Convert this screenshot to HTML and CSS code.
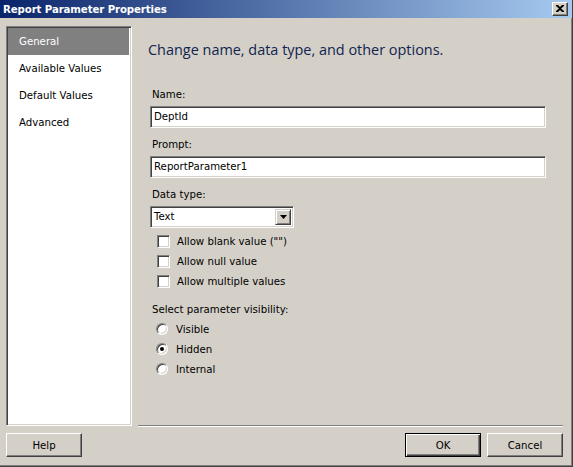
FILE: index.html
```html
<!DOCTYPE html>
<html>
<head>
<meta charset="utf-8">
<link rel="stylesheet" href="styles.css">
</head>
<body>
<div class="window">
  <div class="titlebar">
    <span class="title">Report Parameter Properties</span>
    <span class="close"><svg width="8" height="7" viewBox="0 0 8 7"><path d="M0 0h2l2 2 2-2h2v1L5 3.5 8 6v1H6L4 5 2 7H0V6l3-2.5L0 1z" fill="#000"/></svg></span>
  </div>
  <div class="body">
    <ul class="nav">
      <li class="nav-item selected">General</li>
      <li class="nav-item">Available Values</li>
      <li class="nav-item">Default Values</li>
      <li class="nav-item">Advanced</li>
    </ul>
    <div class="main">
      <h1 class="heading">Change name, data type, and other options.</h1>
      <div class="label first">Name:</div>
      <div class="textbox">DeptId</div>
      <div class="label">Prompt:</div>
      <div class="textbox">ReportParameter1</div>
      <div class="label">Data type:</div>
      <div class="select"><span class="select-text">Text</span><span class="drop"><svg width="7" height="4" viewBox="0 0 7 4"><path d="M0 0h7L3.5 4z" fill="#000"/></svg></span></div>
      <div class="checks">
        <div class="check-row"><span class="checkbox"></span><span>Allow blank value ("")</span></div>
        <div class="check-row"><span class="checkbox"></span><span>Allow null value</span></div>
        <div class="check-row"><span class="checkbox"></span><span>Allow multiple values</span></div>
      </div>
      <div class="label vis">Select parameter visibility:</div>
      <div class="radios">
        <div class="radio-row"><span class="radio"></span><span>Visible</span></div>
        <div class="radio-row"><span class="radio checked"></span><span>Hidden</span></div>
        <div class="radio-row"><span class="radio"></span><span>Internal</span></div>
      </div>
    </div>
  </div>
  <div class="footer">
    <button class="btn">Help</button>
    <div class="spacer"></div>
    <button class="btn default">OK</button>
    <button class="btn">Cancel</button>
  </div>
</div>
</body>
</html>
```
FILE: styles.css
```css
html, body {
  margin: 0;
  padding: 0;
  background: #d4d0c8;
}
body {
  font-family: "DejaVu Sans", sans-serif;
  font-size: 10.2px;
  color: #000;
}
.window {
  width: 573px;
  height: 467px;
  box-sizing: border-box;
  border-right: 1px solid #404040;
  border-bottom: 1px solid #404040;
  box-shadow: inset -1px -1px 0 #808080;
  display: flex;
  flex-direction: column;
}
.titlebar {
  height: 18px;
  background: linear-gradient(to right, #0a246a, #a6caf0);
  display: flex;
  align-items: center;
  padding-left: 3px;
  padding-right: 4px;
}
.title {
  flex: 1;
  color: #fff;
  font-weight: bold;
  font-size: 10.2px;
  letter-spacing: -0.1px;
}
.close {
  width: 16px;
  height: 14px;
  box-sizing: border-box;
  background: #d4d0c8;
  border-top: 1px solid #fff;
  border-left: 1px solid #fff;
  border-right: 1px solid #404040;
  border-bottom: 1px solid #404040;
  box-shadow: inset -1px -1px 0 #808080;
  display: flex;
  align-items: center;
  justify-content: center;
  padding-right: 1px;
  padding-bottom: 1px;
}
.body {
  display: flex;
  padding: 8px 0 0 6px;
  height: 400px;
}
.nav {
  list-style: none;
  margin: 0;
  padding: 0;
  width: 126px;
  height: 400px;
  box-sizing: border-box;
  background: #fff;
  border-top: 1px solid #808080;
  border-left: 1px solid #808080;
  border-right: 1px solid #fff;
  border-bottom: 1px solid #fff;
  box-shadow: inset 1px 1px 0 #404040, inset -1px -1px 0 #d4d0c8;
  padding: 1px 2px 0 1px;
}
.nav-item {
  height: 27px;
  line-height: 27px;
  padding-left: 11px;
}
.nav-item.selected {
  background: #808080;
  color: #fff;
}
.main {
  margin-left: 6px;
  width: 425px;
  height: 400px;
  box-sizing: border-box;
  border-bottom: 1px solid #808080;
  box-shadow: 0 1px 0 #fff;
  padding: 15px 0 0 12px;
  display: flex;
  flex-direction: column;
  align-items: flex-start;
}
.heading {
  margin: 0 0 0 -2px;
  font-family: "Open Sans", sans-serif;
  font-weight: normal;
  font-size: 14.45px;
  line-height: 18px;
  color: #10244f;
  height: 18px;
}
.label {
  margin: 10px 0 5px 2px;
  line-height: 13px;
  height: 13px;
}
.label.first {
  margin-top: 29px;
}
.textbox, .select {
  width: 396px;
  height: 22px;
  box-sizing: border-box;
  background: #fff;
  border-top: 1px solid #808080;
  border-left: 1px solid #808080;
  border-right: 1px solid #fff;
  border-bottom: 1px solid #fff;
  box-shadow: inset 1px 1px 0 #404040, inset -1px -1px 0 #d4d0c8;
  padding-left: 3px;
  line-height: 20px;
}
.select {
  width: 144px;
  display: flex;
  justify-content: space-between;
  padding-right: 2px;
}
.select-text {
  line-height: 20px;
}
.drop {
  margin-top: 2px;
  width: 16px;
  height: 16px;
  box-sizing: border-box;
  background: #d4d0c8;
  border-top: 1px solid #d4d0c8;
  border-left: 1px solid #d4d0c8;
  border-right: 1px solid #404040;
  border-bottom: 1px solid #404040;
  box-shadow: inset 1px 1px 0 #fff, inset -1px -1px 0 #808080;
  display: flex;
  align-items: center;
  justify-content: center;
}
.checks {
  margin-top: 3px;
  margin-left: 7px;
}
.check-row, .radio-row {
  height: 20px;
  display: flex;
  align-items: center;
}
.checkbox {
  width: 13px;
  height: 13px;
  box-sizing: border-box;
  background: #fff;
  border-top: 1px solid #808080;
  border-left: 1px solid #808080;
  border-right: 1px solid #fff;
  border-bottom: 1px solid #fff;
  box-shadow: inset 1px 1px 0 #404040, inset -1px -1px 0 #d4d0c8;
  margin-right: 7px;
}
.label.vis {
  margin-top: 12px;
  margin-bottom: 3px;
}
.radios {
  margin-left: 6px;
}
.radio {
  width: 12px;
  height: 12px;
  box-sizing: border-box;
  border-radius: 50%;
  background: #fff;
  border: 1px solid;
  border-color: #808080 #fff #fff #808080;
  box-shadow: inset 1px 1px 0 #404040, inset -1px -1px 0 #d4d0c8;
  margin-right: 8px;
  position: relative;
}
.radio.checked::after {
  content: "";
  position: absolute;
  left: 3px;
  top: 3px;
  width: 4px;
  height: 4px;
  border-radius: 50%;
  background: #000;
}
.footer {
  display: flex;
  padding: 7px 0 0 6px;
  padding-right: 9px;
}
.spacer {
  flex: 1;
}
.btn {
  width: 76px;
  height: 24px;
  box-sizing: border-box;
  font-family: "DejaVu Sans", sans-serif;
  font-size: 10.2px;
  color: #000;
  background: #d4d0c8;
  border-top: 1px solid #fff;
  border-left: 1px solid #fff;
  border-right: 1px solid #404040;
  border-bottom: 1px solid #404040;
  box-shadow: inset -1px -1px 0 #808080;
  padding: 0;
  margin-left: 6px;
}
.btn:first-child {
  margin-left: 0;
}
.btn.default {
  border: 1px solid #000;
  box-shadow: inset 1px 1px 0 #fff, inset -1px -1px 0 #404040, inset -2px -2px 0 #808080;
}
```
